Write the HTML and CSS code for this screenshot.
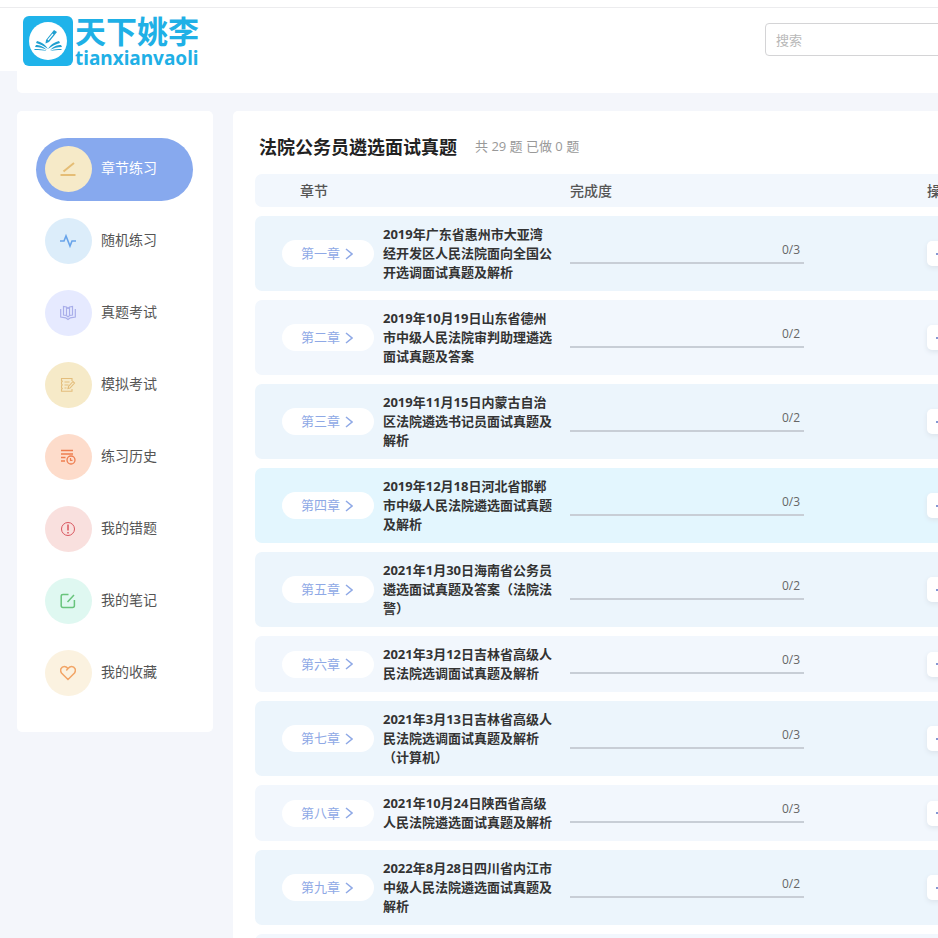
FILE: index.html
```html
<!DOCTYPE html>
<html lang="zh-CN">
<head>
<meta charset="utf-8">
<title>法院公务员遴选面试真题</title>
<link rel="stylesheet" href="styles.css">
</head>
<body>
<div class="page">
  <header class="topbar">
    <a class="brand" href="#">
      <svg class="brand-mark" viewBox="0 0 50 50" aria-hidden="true">
        <rect width="50" height="50" rx="6" fill="#1fb3ea"/>
        <circle cx="25" cy="25" r="19" fill="#fff"/>
        <g fill="#1f9fd0">
          <path d="M25 33c-3-5-7-7-11-8l-1 2c4 1 8 3 12 6z"/>
          <path d="M24 34c-4-4-8-5-11-5l-1 2c5 0 8 1 12 3z"/>
          <path d="M24 35c-4-2-9-2-13-2l1 1c4 0 8 0 12 1z"/>
          <path d="M25 33c3-5 7-7 11-8l1 2c-4 1-8 3-12 6z"/>
          <path d="M27 34c4-4 7-5 11-5l1 2c-5 0-8 1-12 3z"/>
          <path d="M27 35c4-2 8-2 12-2l-1 1c-4 0-7 0-11 1z"/>
          <path d="M23 24l8-10 3 2-8 10-3.500 1.500z"/>
        </g>
        <path d="M25 24l5-6" stroke="#fff" stroke-width="1.200"/>
      </svg>
      <span class="brand-text">
        <span class="brand-name">天下姚李</span>
        <span class="brand-latin">tianxianvaoli</span>
      </span>
    </a>
    <input class="search" type="search" placeholder="搜索" aria-label="搜索">
  </header>
  <div class="strip"></div>

  <div class="layout">
    <nav class="sidebar">
      <a class="nav-item active" href="#"><span class="nav-icon gold"><svg viewBox="0 0 16 16"><path d="M.500 14h15M3.500 10.500L14 2" stroke-width="2"/></svg></span><span class="nav-label">章节练习</span></a>
      <a class="nav-item" href="#"><span class="nav-icon sky"><svg viewBox="0 0 16 16"><path d="M0 8h4l2-5 4 10 2-5h4" stroke-width="1.600"/></svg></span><span class="nav-label">随机练习</span></a>
      <a class="nav-item" href="#"><span class="nav-icon violet"><svg viewBox="0 0 16 16"><path d="M8 3.500L6.500 2 3.500 1.500v8.500l3 .5L8 12l1.500-1.500 3-.5V1.500L9.500 2 8 3.500M6.500 2v8.500M9.500 2v8.500M.700 4v8l5 .8L8 14.500l2.300-1.700 5-.8V4" stroke-width="1.200"/></svg></span><span class="nav-label">真题考试</span></a>
      <a class="nav-item" href="#"><span class="nav-icon sand"><svg viewBox="0 0 16 16"><path d="M12 4V1.500H1.500v2l.8.8-.8.800v2l.8.800-.8.800v2l.8.800-.8.800v2H12V12M4.500 5h5M4.500 8h4M4.500 11h2M8 11.500l.5-2L13 4.500l1.500 1.500-4.500 5z" stroke-width="1.100"/></svg></span><span class="nav-label">模拟考试</span></a>
      <a class="nav-item" href="#"><span class="nav-icon orange"><svg viewBox="0 0 16 16"><path d="M1 1.500h12M1 5h12M1 8.500h4.500M1 12h4" stroke-width="1.300"/><circle cx="11" cy="11" r="4" stroke-width="1.300"/><path d="M10.500 9v2.300h2" stroke-width="1.200"/></svg></span><span class="nav-label">练习历史</span></a>
      <a class="nav-item" href="#"><span class="nav-icon rose"><svg viewBox="0 0 16 16"><circle cx="8" cy="8" r="6.500" stroke-width="1"/><path d="M8 3.500v6M8 11v1.500" stroke-width="1.500"/></svg></span><span class="nav-label">我的错题</span></a>
      <a class="nav-item" href="#"><span class="nav-icon mint"><svg viewBox="0 0 16 16"><path d="M8.500 1.500H3Q1.200 1.500 1.200 3.200v9.600q0 1.700 1.800 1.700h9.500q1.900 0 1.900-1.700V7M7.500 9L14 2" stroke-width="1.500"/></svg></span><span class="nav-label">我的笔记</span></a>
      <a class="nav-item" href="#"><span class="nav-icon cream"><svg viewBox="0 0 16 16"><path d="M8 14.500L1.500 8C-.5 5 1.300 1.500 4.300 1.500c1.600 0 2.600.8 3.700 2.100 1.100-1.300 2.100-2.100 3.700-2.100 3 0 4.800 3.500 2.800 6.500zM8 3.600L6.300 5.600" stroke-width="1.500"/></svg></span><span class="nav-label">我的收藏</span></a>
    </nav>

    <main class="panel">
      <div class="panel-head">
        <h1>法院公务员遴选面试真题</h1>
        <span class="summary">共 29 题 已做 0 题</span>
      </div>
      <table class="chapters">
        <thead>
          <tr><th class="col-chapter">章节</th><th class="col-progress">完成度</th><th class="col-action">操作</th></tr>
        </thead>
        <tbody>
          <tr><td><div class="chapter"><a class="pill" href="#">第一章<svg viewBox="0 0 8 12"><path d="M1 1l6 5-6 5"/></svg></a><span>2019年广东省惠州市大亚湾<br>经开发区人民法院面向全国公<br>开选调面试真题及解析</span></div></td><td><div class="progress">0/3</div></td><td><button class="go" aria-label="开始"><i></i></button></td></tr>
          <tr><td><div class="chapter"><a class="pill" href="#">第二章<svg viewBox="0 0 8 12"><path d="M1 1l6 5-6 5"/></svg></a><span>2019年10月19日山东省德州<br>市中级人民法院审判助理遴选<br>面试真题及答案</span></div></td><td><div class="progress">0/2</div></td><td><button class="go" aria-label="开始"><i></i></button></td></tr>
          <tr><td><div class="chapter"><a class="pill" href="#">第三章<svg viewBox="0 0 8 12"><path d="M1 1l6 5-6 5"/></svg></a><span>2019年11月15日内蒙古自治<br>区法院遴选书记员面试真题及<br>解析</span></div></td><td><div class="progress">0/2</div></td><td><button class="go" aria-label="开始"><i></i></button></td></tr>
          <tr class="current"><td><div class="chapter"><a class="pill" href="#">第四章<svg viewBox="0 0 8 12"><path d="M1 1l6 5-6 5"/></svg></a><span>2019年12月18日河北省邯郸<br>市中级人民法院遴选面试真题<br>及解析</span></div></td><td><div class="progress">0/3</div></td><td><button class="go" aria-label="开始"><i></i></button></td></tr>
          <tr><td><div class="chapter"><a class="pill" href="#">第五章<svg viewBox="0 0 8 12"><path d="M1 1l6 5-6 5"/></svg></a><span>2021年1月30日海南省公务员<br>遴选面试真题及答案（法院法<br>警）</span></div></td><td><div class="progress">0/2</div></td><td><button class="go" aria-label="开始"><i></i></button></td></tr>
          <tr><td><div class="chapter"><a class="pill" href="#">第六章<svg viewBox="0 0 8 12"><path d="M1 1l6 5-6 5"/></svg></a><span>2021年3月12日吉林省高级人<br>民法院选调面试真题及解析</span></div></td><td><div class="progress">0/3</div></td><td><button class="go" aria-label="开始"><i></i></button></td></tr>
          <tr><td><div class="chapter"><a class="pill" href="#">第七章<svg viewBox="0 0 8 12"><path d="M1 1l6 5-6 5"/></svg></a><span>2021年3月13日吉林省高级人<br>民法院选调面试真题及解析<br>（计算机）</span></div></td><td><div class="progress">0/3</div></td><td><button class="go" aria-label="开始"><i></i></button></td></tr>
          <tr><td><div class="chapter"><a class="pill" href="#">第八章<svg viewBox="0 0 8 12"><path d="M1 1l6 5-6 5"/></svg></a><span>2021年10月24日陕西省高级<br>人民法院遴选面试真题及解析</span></div></td><td><div class="progress">0/3</div></td><td><button class="go" aria-label="开始"><i></i></button></td></tr>
          <tr><td><div class="chapter"><a class="pill" href="#">第九章<svg viewBox="0 0 8 12"><path d="M1 1l6 5-6 5"/></svg></a><span>2022年8月28日四川省内江市<br>中级人民法院遴选面试真题及<br>解析</span></div></td><td><div class="progress">0/2</div></td><td><button class="go" aria-label="开始"><i></i></button></td></tr>
          <tr class="spare"><td></td><td></td><td></td></tr>
        </tbody>
      </table>
    </main>
  </div>
</div>
</body>
</html>
```
FILE: styles.css
```css
* { box-sizing: border-box; }

html { overflow: hidden; }

body {
  margin: 0;
  background: #f4f6fb;
  color: #555;
  font-family: "Open Sans", "Noto Sans CJK SC", sans-serif;
  font-size: 14px;
}

a { color: inherit; text-decoration: none; }

.page { min-width: 1200px; }

.topbar {
  display: flex;
  align-items: flex-start;
  gap: 568px;
  height: 71px;
  padding: 8px 0 0 23px;
  background: linear-gradient(#ececee, #ececee) 0 7px / 100% 1px no-repeat #fff;
}

.brand {
  display: flex;
  flex: none;
  gap: 2px;
  width: 174px;
  padding-top: 8px;
  color: #1fb0e6;
  font-weight: 700;
}

.brand-mark { flex: none; width: 50px; height: 50px; }

.brand-text { display: flex; flex-direction: column; white-space: nowrap; }

.brand-name { font-size: 31px; line-height: 30px; }

.brand-latin { font-family: "Noto Sans", sans-serif; font-size: 19px; line-height: 24px; }

.search {
  flex: 1;
  height: 33px;
  margin-top: 15px;
  padding: 0 10px;
  border: 1px solid #d4d4d6;
  border-radius: 4px;
  background: #fff;
  font: inherit;
  font-size: 13px;
}

.search::placeholder { color: #b8b8b8; }

.strip {
  height: 22px;
  margin-left: 17px;
  border-bottom-left-radius: 5px;
  background: #fff;
}

.layout {
  display: flex;
  align-items: flex-start;
  gap: 20px;
  padding: 18px 0 0 17px;
}

.sidebar {
  display: flex;
  flex: none;
  flex-direction: column;
  gap: 9px;
  width: 196px;
  padding: 27px 20px 27px 19px;
  border-radius: 5px;
  background: #fff;
}

.nav-item {
  display: flex;
  align-items: flex-start;
  gap: 9px;
  height: 63px;
  padding: 8px 0 0 9px;
  border-radius: 32px;
}

.nav-item.active { background: #87a9ee; color: #fff; }

.nav-label { line-height: 44px; }

.nav-icon {
  display: flex;
  align-items: center;
  justify-content: center;
  width: 47px;
  height: 46px;
  padding-right: 1px;
  border-radius: 50%;
}

.nav-icon svg { width: 16px; height: 16px; fill: none; stroke: currentColor; }

.gold { background: #f6eac8; color: #e5bd75; }
.sky { background: #dcedfa; color: #68a4ea; }
.violet { background: #e6eaff; color: #a9aeea; }
.sand { background: #f6eac8; color: #e3bd7c; }
.orange { background: #fddccb; color: #ee7d4f; }
.rose { background: #f9e0de; color: #d9565f; }
.mint { background: #dff8f1; color: #68c47c; }
.cream { background: #fbf2e0; color: #f2a566; }

.panel {
  flex: 1;
  min-height: 850px;
  padding: 24px 22px;
  border-radius: 5px 0 0;
  background: #fff;
}

.panel-head {
  display: flex;
  align-items: flex-start;
  gap: 18px;
  height: 24px;
  padding-left: 4px;
}

h1 { margin: 0; color: #222; font-size: 18px; line-height: 24px; }

.summary { color: #999; font-size: 13px; line-height: 22px; }

.chapters {
  width: 100%;
  margin-top: 6px;
  border-spacing: 0 9px;
  table-layout: fixed;
}

th {
  height: 33px;
  padding: 0;
  background: #f2f7fd;
  font-weight: 500;
  line-height: 20px;
  text-align: left;
}

.col-chapter { width: 315px; padding-left: 45px; }
.col-progress { width: 357px; }

td { padding: 9px 0; background: #f2f7fd; }

tbody tr:nth-child(odd) td { background: #ecf5fc; }
tbody tr.current td { background: #e3f6fe; }
tbody tr.spare td { height: 56px; background: #f2f7fd; }

th:first-child, td:first-child { border-radius: 7px 0 0 7px; }
th:last-child, td:last-child { border-radius: 0 7px 7px 0; }

.chapter {
  display: flex;
  align-items: center;
  gap: 9px;
  padding-left: 27px;
  color: #333;
  font-size: 13px;
  font-weight: 700;
  line-height: 19px;
  white-space: nowrap;
}

.pill {
  display: flex;
  flex: none;
  align-items: center;
  justify-content: center;
  gap: 5px;
  width: 92px;
  height: 27px;
  padding-right: 2px;
  border-radius: 14px;
  background: #fff;
  color: #8fa9e6;
  font-weight: 400;
}

.pill svg { width: 8px; height: 12px; fill: none; stroke: currentColor; stroke-width: 1.5; }

.progress {
  width: 234px;
  margin-bottom: 6px;
  padding-right: 4px;
  border-bottom: 2px solid #c8ced6;
  color: #666;
  font-size: 12px;
  line-height: 24px;
  text-align: right;
}

.go {
  display: flex;
  align-items: center;
  width: 40px;
  height: 25px;
  padding: 0 9px;
  border: 0;
  border-radius: 5px;
  background: #fff;
  box-shadow: 0 2px 5px #dde4ec;
}

.go i { width: 14px; height: 2px; background: #8598d2; }
```
